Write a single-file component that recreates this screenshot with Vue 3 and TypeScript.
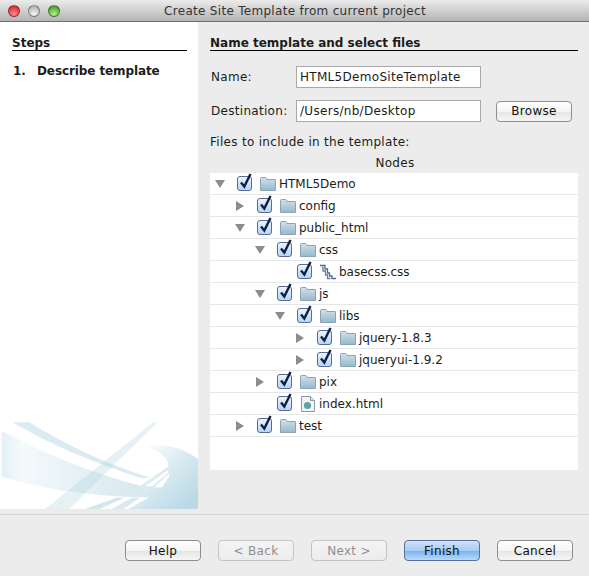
<template>
  <div class="window">
    <div class="titlebar">
      <div class="lights">
        <span class="light red"></span>
        <span class="light grey"></span>
        <span class="light green"></span>
      </div>
      <span class="title">Create Site Template from current project</span>
    </div>

    <div class="main">
      <aside class="steps">
        <div class="steps-top">
          <h3 class="heading">Steps</h3>
          <div class="step"><span class="step-num">1.</span><span>Describe template</span></div>
        </div>
        <svg class="swoosh" width="198" height="94" viewBox="0 0 594 282">
          <defs>
            <linearGradient id="wedge" gradientUnits="userSpaceOnUse" x1="5" y1="150" x2="440" y2="150">
              <stop offset="0" stop-color="#e2f0f5" />
              <stop offset="0.14" stop-color="#f5fafc" />
              <stop offset="0.55" stop-color="#e4f0f5" />
              <stop offset="1" stop-color="#d8e8ef" />
            </linearGradient>
            <linearGradient id="curve" gradientUnits="userSpaceOnUse" x1="440" y1="100" x2="580" y2="260">
              <stop offset="0" stop-color="#f8fcfd" />
              <stop offset="0.45" stop-color="#d9eaf1" />
              <stop offset="1" stop-color="#b9d9e6" />
            </linearGradient>
            <linearGradient id="box" x1="0" y1="0" x2="0" y2="1">
              <stop offset="0" stop-color="#eef5fd" />
              <stop offset="1" stop-color="#b4d3f6" />
            </linearGradient>
            <linearGradient id="folder" x1="0" y1="0" x2="0" y2="1">
              <stop offset="0" stop-color="#d2e1ea" />
              <stop offset="1" stop-color="#96b8cc" />
            </linearGradient>
          </defs>
          <path d="M5 47 C130 115 280 175 420 212 L445 247 C300 245 130 225 5 185 Z" fill="url(#wedge)" />
          <path d="M38 22 L88 22 C180 80 300 140 450 188 L425 190 C300 150 150 90 38 22 Z" fill="#dcebf2" />
          <path d="M255 282 L350 248 L372 248 L300 282 Z" fill="#d4e6ee" />
          <path d="M335 282 L395 248 L420 248 L370 282 Z" fill="#d8e9f0" />
          <path d="M432 92 C470 88 530 85 594 132 L594 282 L385 282 L445 248 L420 212 L505 155 C510 135 480 105 432 92 Z" fill="url(#curve)" />
          <path d="M437 213 L458 213 L505 172 L505 165 Z" fill="#fff" />
          <path d="M463 217 L486 217 L508 183 L507 175 Z" fill="#fff" />
          <path d="M460 22 L472 22 L208 282 L135 282 Z" fill="#a9cfdf" fill-opacity="0.3" />
        </svg>
      </aside>

      <section class="content">
        <h3 class="heading">Name template and select files</h3>
        <div class="field name-field">
          <label class="field-label">Name:</label>
          <div class="input">HTML5DemoSiteTemplate</div>
        </div>
        <div class="field dest-field">
          <label class="field-label">Destination:</label>
          <div class="input">/Users/nb/Desktop</div>
          <button class="btn browse">Browse</button>
        </div>
        <div class="files-label">Files to include in the template:</div>
        <div class="nodes-head">Nodes</div>
        <div class="tree">
          <div v-for="node in nodes" :key="node.label" class="row" :style="{ paddingLeft: node.depth * 20 + 'px' }">
            <span class="arrow-cell">
              <svg v-if="node.open !== undefined" width="10" height="10" viewBox="0 0 10 10">
                <path v-if="node.open" d="M0 1 H10 L5 9 Z" fill="#8c8c8c" />
                <path v-else d="M1 0 V10 L9 5 Z" fill="#8c8c8c" />
              </svg>
            </span>
            <svg class="check" width="17" height="18" viewBox="0 0 17 18">
              <rect x="0.5" y="3.5" width="14" height="14" rx="2.5" fill="url(#box)" stroke="#5a6a96" />
              <path d="M4 9.5 L7.3 13.5 L13.5 1" fill="none" stroke="#0c2144" stroke-width="2.4" />
            </svg>
            <svg v-if="node.kind === 'folder'" class="icon" width="16" height="14" viewBox="0 0 16 14">
              <path d="M0.5 13.5 V1.5 Q0.5 0.5 1.5 0.5 H5.5 Q6.5 0.5 7 2.5 H15 Q15.5 2.5 15.5 3 V13.5 Z" fill="url(#folder)" stroke="#8ba3b3" />
            </svg>
            <svg v-else-if="node.kind === 'css'" class="icon" width="16" height="16" viewBox="0 0 16 16">
              <path d="M0 1.5 H5 V5 H7.5 V9 H9.5 V12 H12 V14.5 H16" fill="none" stroke="#52689a" stroke-width="1.3" />
              <path d="M2 3.5 H3 V7 H5.5 V11 H7.5 V14.5 H10.5" fill="none" stroke="#6d7f9e" stroke-width="1.3" />
            </svg>
            <svg v-else class="icon" width="16" height="16" viewBox="0 0 16 16">
              <path d="M1.5 0.5 H10.5 L14.5 4.5 V15.5 H1.5 Z" fill="#f2f5f7" stroke="#8e98a4" />
              <path d="M10.5 0.5 V4.5 H14.5" fill="#dfe5ea" stroke="#8e98a4" />
              <circle cx="7.5" cy="9.5" r="3.6" fill="#5f9fbe" />
              <path d="M5.5 7.5 L9.5 8 L8 12 Z" fill="#63b04a" />
            </svg>
            <span class="node-label">{{ node.label }}</span>
          </div>
        </div>
      </section>
    </div>

    <div class="separator"></div>

    <div class="footer">
      <button class="btn">Help</button>
      <button class="btn" disabled>&lt; Back</button>
      <button class="btn" disabled>Next &gt;</button>
      <button class="btn primary">Finish</button>
      <button class="btn">Cancel</button>
    </div>
  </div>
</template>

<script setup lang="ts">
interface TreeNode {
  label: string
  depth: number
  kind: 'folder' | 'css' | 'html'
  open?: boolean
}

const nodes: TreeNode[] = [
  { label: 'HTML5Demo', depth: 0, kind: 'folder', open: true },
  { label: 'config', depth: 1, kind: 'folder', open: false },
  { label: 'public_html', depth: 1, kind: 'folder', open: true },
  { label: 'css', depth: 2, kind: 'folder', open: true },
  { label: 'basecss.css', depth: 3, kind: 'css' },
  { label: 'js', depth: 2, kind: 'folder', open: true },
  { label: 'libs', depth: 3, kind: 'folder', open: true },
  { label: 'jquery-1.8.3', depth: 4, kind: 'folder', open: false },
  { label: 'jqueryui-1.9.2', depth: 4, kind: 'folder', open: false },
  { label: 'pix', depth: 2, kind: 'folder', open: false },
  { label: 'index.html', depth: 2, kind: 'html' },
  { label: 'test', depth: 1, kind: 'folder', open: false }
]
</script>

<style>
html, body {
  margin: 0;
  background: #ececec;
}
</style>

<style scoped>
.window {
  width: 589px;
  height: 576px;
  display: flex;
  flex-direction: column;
  background: #ececec;
  color: #1c1c1c;
  font-family: "DejaVu Sans", sans-serif;
  font-size: 12px;
  letter-spacing: 0.3px;
  overflow: hidden;
}

.titlebar {
  height: 22px;
  box-sizing: border-box;
  flex: none;
  display: flex;
  align-items: center;
  position: relative;
  justify-content: center;
  background: linear-gradient(#ebebeb, #b4b4b4);
  border-bottom: 1px solid #6e6e6e;
  border-radius: 4px 4px 0 0;
  color: #333;
}

.title {
  margin-left: 1px;
}

.lights {
  position: absolute;
  left: 8px;
  top: 5px;
  display: flex;
  gap: 8px;
}

.light {
  width: 12px;
  height: 12px;
  border-radius: 50%;
  box-sizing: border-box;
  border: 1px solid rgba(0, 0, 0, 0.35);
}

.red { background: radial-gradient(circle at 50% 80%, #ff8f8f, #dc2f34 75%); }
.grey { background: radial-gradient(circle at 50% 80%, #f6f6f6, #adadad 85%); }
.green { background: radial-gradient(circle at 50% 80%, #b8ee8c, #4ea432 75%); }

.main {
  height: 487px;
  flex: none;
  display: flex;
}

.steps {
  width: 198px;
  flex: none;
  background: #fff;
  display: flex;
  flex-direction: column;
  justify-content: space-between;
}

.steps-top {
  padding: 14px 11px 0 12px;
}

.swoosh {
  display: block;
}

.heading {
  margin: 0;
  font-size: 12px;
  font-weight: bold;
  letter-spacing: 0;
  line-height: 14px;
  padding-bottom: 0;
  border-bottom: 1px solid #000;
  height: 14px;
}

.step {
  margin-top: 13px;
  display: flex;
  font-weight: bold;
  letter-spacing: -0.1px;
  line-height: 14px;
  padding-left: 1px;
}

.step-num {
  width: 24px;
}

.content {
  flex: 1;
  padding: 14px 11px 0 12px;
}

.field {
  display: flex;
  align-items: center;
}

.name-field {
  margin-top: 15px;
}

.dest-field {
  margin-top: 12px;
}

.field-label {
  width: 86px;
  flex: none;
  padding-left: 1px;
  box-sizing: border-box;
}

.input {
  width: 185px;
  height: 22px;
  box-sizing: border-box;
  background: #fff;
  border: 1px solid #a8a8a8;
  padding-left: 3px;
  line-height: 20px;
}

.files-label {
  margin-top: 13px;
  line-height: 14px;
}

.nodes-head {
  text-align: center;
  line-height: 14px;
  margin-top: 7px;
  height: 17px;
  padding-left: 2px;
}

.tree {
  height: 297px;
  background: #fff;
}

.row {
  height: 22px;
  box-sizing: border-box;
  border-bottom: 1px solid #e6e6e6;
  display: flex;
  align-items: center;
}

.node-label {
  letter-spacing: 0;
}

.arrow-cell {
  width: 20px;
  height: 10px;
  flex: none;
  display: flex;
  justify-content: center;
  align-items: center;
  margin-right: 7px;
}

.check {
  flex: none;
  margin-top: -3px;
}

.icon {
  flex: none;
  margin-left: 6px;
  margin-right: 3px;
}

.footer {
  flex: 1;
  display: flex;
  justify-content: flex-end;
  gap: 17px;
  padding: 25px 16px 0 0;
}

.separator {
  height: 1px;
  flex: none;
  margin-top: 5px;
  background: #d4d4d4;
}

.btn {
  width: 76px;
  height: 21px;
  box-sizing: border-box;
  padding: 0;
  font: inherit;
  letter-spacing: inherit;
  color: #111;
  background: linear-gradient(#fff 0%, #f4f4f4 50%, #e6e6e6 55%, #f6f6f6 100%);
  border: 1px solid #8e8e8e;
  border-radius: 4px;
}

.btn:disabled {
  color: #8f8f8f;
  border-color: #c4c4c4;
  background: linear-gradient(#f4f4f4, #ececec);
}

.primary {
  background: linear-gradient(#d0e2f8 0%, #a8ccf4 50%, #7fb4ee 55%, #b4dcfa 100%);
  border-color: #5a6e98;
}

.browse {
  margin-left: 15px;
}
</style>
